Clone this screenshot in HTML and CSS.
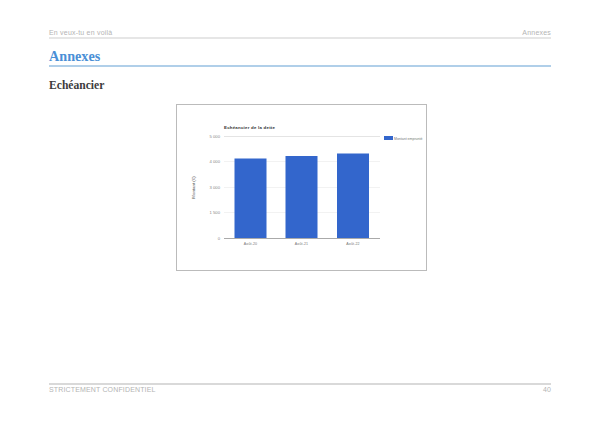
FILE: index.html
```html
<!DOCTYPE html>
<html lang="fr">
<head>
<meta charset="utf-8">
<title>Annexes</title>
<link rel="stylesheet" href="styles.css">
</head>
<body>
<div class="page">
  <header class="running-head">
    <span>En veux-tu en voilà</span>
    <span>Annexes</span>
  </header>
  <h1 class="title">Annexes</h1>
  <h2 class="subtitle">Echéancier</h2>
  <figure class="figure">
    <svg class="chart" width="251" height="167" viewBox="176 104 251 167" xmlns="http://www.w3.org/2000/svg">
      <rect class="frame" x="176.5" y="104.5" width="250" height="166"/>
      <text class="chart-title" x="224" y="129">Echéancier de la dette</text>
      <line class="grid-top" x1="224" x2="380" y1="136.5" y2="136.5"/>
      <line class="grid" x1="224" x2="380" y1="161.5" y2="161.5"/>
      <line class="grid" x1="224" x2="380" y1="187.5" y2="187.5"/>
      <line class="grid" x1="224" x2="380" y1="212.5" y2="212.5"/>
      <text class="tick" x="220" y="137.5">5 000</text>
      <text class="tick" x="220" y="163">4 000</text>
      <text class="tick" x="220" y="188.5">3 000</text>
      <text class="tick" x="220" y="214">1 500</text>
      <text class="tick" x="220" y="240">0</text>
      <text class="axis-name" transform="translate(194.5 187.5) rotate(-90)">Montant (€)</text>
      <rect class="bar" x="234.5" y="158.5" width="32" height="80"/>
      <rect class="bar" x="285.5" y="156" width="32" height="82.5"/>
      <rect class="bar" x="337" y="153.5" width="32" height="85"/>
      <line class="baseline" x1="224" x2="380" y1="238.5" y2="238.5"/>
      <text class="cat" x="250.5" y="245">Août-20</text>
      <text class="cat" x="301.5" y="245">Août-21</text>
      <text class="cat" x="353" y="245">Août-22</text>
      <rect class="bar" x="384" y="136" width="9" height="4"/>
      <text class="legend" x="394" y="139.5">Montant emprunté</text>
    </svg>
  </figure>
  <footer class="running-foot">
    <span>STRICTEMENT CONFIDENTIEL</span>
    <span>40</span>
  </footer>
</div>
</body>
</html>
```
FILE: styles.css
```css
html, body {
  margin: 0;
  padding: 0;
  background: #fff;
}
.page {
  box-sizing: border-box;
  width: 600px;
  height: 423px;
  padding: 28px 49px 0 49px;
  display: flex;
  flex-direction: column;
}
.running-head {
  display: flex;
  justify-content: space-between;
  align-items: flex-end;
  height: 9px;
  border-bottom: 2px solid #e6e6e6;
  font: 7px/9px "Liberation Sans", Arial, sans-serif;
  color: #b4b4b4;
  letter-spacing: 0.2px;
}
.title {
  margin: 9px 0 0 0;
  height: 17px;
  border-bottom: 2px solid #b0cfe9;
  font: bold 14.2px/17px "Liberation Serif", "Times New Roman", serif;
  color: #4a8fd6;
}
.subtitle {
  margin: 11px 0 0 0;
  height: 15px;
  font: bold 11.6px/15px "Liberation Serif", "Times New Roman", serif;
  color: #3c3c3c;
}
.figure {
  margin: 11px 0 0 0;
  display: flex;
  justify-content: flex-start;
  height: 167px;
}
.chart {
  display: block;
  flex: none;
  margin-left: 127px;
}
.frame {
  fill: #fff;
  stroke: #bbb;
  stroke-width: 1;
}
.chart-title {
  font: bold 4.4px "Liberation Sans", Arial, sans-serif;
  letter-spacing: 0.22px;
  fill: #333;
}
.tick {
  font: 4.2px "Liberation Sans", Arial, sans-serif;
  fill: #888;
  text-anchor: end;
}
.axis-name {
  font: 4.4px "Liberation Sans", Arial, sans-serif;
  fill: #555;
  text-anchor: middle;
}
.cat {
  font: 3.6px "Liberation Sans", Arial, sans-serif;
  letter-spacing: 0.1px;
  fill: #777;
  text-anchor: middle;
}
.legend {
  font: 3.5px "Liberation Sans", Arial, sans-serif;
  fill: #777;
}
.grid-top {
  stroke: #e4e4e4;
  stroke-width: 1;
}
.grid {
  stroke: #f2f2f2;
  stroke-width: 1;
}
.baseline {
  stroke: #aaa;
  stroke-width: 1;
}
.bar {
  fill: #3366cc;
}
.running-foot {
  margin-top: 112px;
  display: flex;
  justify-content: space-between;
  border-top: 2px solid #d9d9d9;
  font: 7px/9px "Liberation Sans", Arial, sans-serif;
  color: #b4b4b4;
  letter-spacing: 0.15px;
}
```
